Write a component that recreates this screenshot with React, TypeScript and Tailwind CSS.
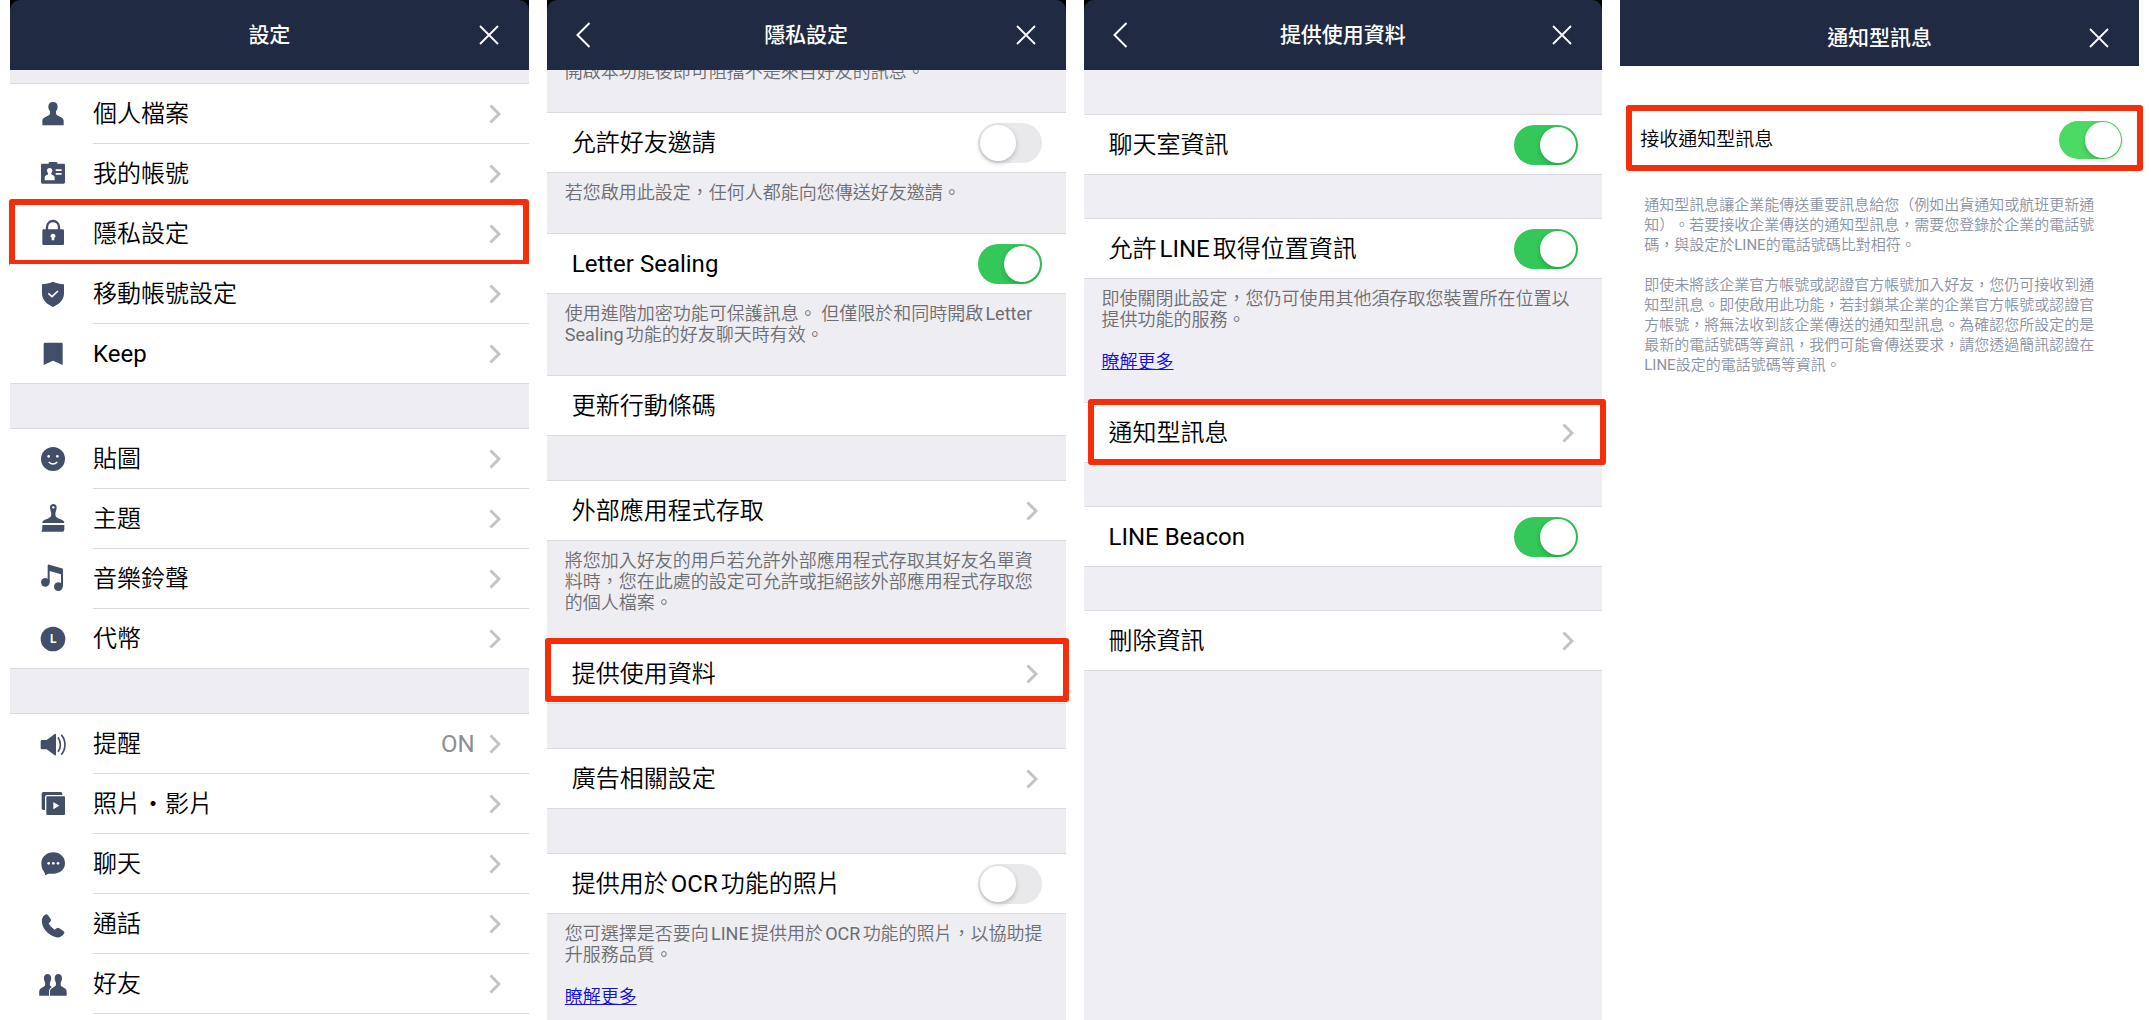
import type { ReactNode } from "react";

const PERSON =
  "M70 36c-9 0-14 6-14 14 0 5 2 10 5 14v6c0 4-3 6-8 8-8 4-15 7-15 15v13h64V93c0-8-7-11-15-15-5-2-8-4-8-8v-6c3-4 5-9 5-14 0-8-5-14-14-14z";

function Glyph({ cy, children }: { cy: number; children: ReactNode }) {
  return (
    <svg
      viewBox={`25 ${cy - 45} 90 90`}
      className="size-[30px] shrink-0 fill-[#434e68]"
      aria-hidden="true"
    >
      {children}
    </svg>
  );
}

const icons: Record<string, ReactNode> = {
  person: (
    <Glyph cy={72}>
      <path d={PERSON} />
    </Glyph>
  ),
  badge: (
    <Glyph cy={252}>
      <path d="M38 221h19v-2a3 3 0 0 1 3-3h20a3 3 0 0 1 3 3v2h19a4 4 0 0 1 4 4v52a4 4 0 0 1-4 4H38a4 4 0 0 1-4-4v-52a4 4 0 0 1 4-4z" />
      <path
        fill="#fff"
        d="M60 234c-5 0-8 3-8 8 0 3 1 5 3 7v4c-4 3-10 4-10 10v8h30v-8c0-6-6-7-10-10v-4c2-2 3-4 3-7 0-5-3-8-8-8zM78 238h18v5H78zM78 249h18v5H78z"
      />
    </Glyph>
  ),
  lock: (
    <Glyph cy={432}>
      <path fill="none" stroke="#434e68" strokeWidth="7" d="M52 421v-10a18 18 0 0 1 36 0v10" />
      <rect x="38" y="418" width="65" height="47" rx="4" />
      <path fill="#fff" d="M70 431a7 7 0 0 0-4 13v7h8v-7a7 7 0 0 0-4-13z" />
    </Glyph>
  ),
  shield: (
    <Glyph cy={612}>
      <path d="M70 575c10 5 22 7 33 8v27c0 20-14 33-33 41-19-8-33-21-33-41v-27c11-1 23-3 33-8z" />
      <path fill="none" stroke="#fff" strokeWidth="5" d="M56 610l11 10 18-17" />
    </Glyph>
  ),
  bookmark: (
    <Glyph cy={792}>
      <path d="M46 758h49a4 4 0 0 1 4 4v63l-29-13-28 13v-63a4 4 0 0 1 4-4z" />
    </Glyph>
  ),
  smile: (
    <Glyph cy={87}>
      <circle cx="70" cy="87" r="36" />
      <circle cx="57" cy="79" r="4" fill="#fff" />
      <circle cx="83" cy="79" r="4" fill="#fff" />
      <path fill="none" stroke="#fff" strokeWidth="4" d="M57 96q13 12 26 0" />
    </Glyph>
  ),
  brush: (
    <Glyph cy={267}>
      <path d="M71 222c-6 0-10 4-10 10 0 8 4 14 4 21s-4 10-11 13c-8 3-16 4-16 13h66c0-9-8-10-16-13-7-3-11-6-11-13s4-13 4-21c0-6-4-10-10-10z" />
      <path d="M38 285h66v11c0 5-2 9-5 9H35c3-5 3-12 3-20z" />
      <circle cx="71" cy="232" r="3.5" fill="#fff" />
    </Glyph>
  ),
  music: (
    <Glyph cy={447}>
      <circle cx="47" cy="457" r="13" />
      <circle cx="86" cy="470" r="13" />
      <path d="M54 407c0-3 2-4 5-3l37 11c3 1 4 2 4 5v50h-6v-37l-34-10v34h-6z" />
    </Glyph>
  ),
  coin: (
    <Glyph cy={627}>
      <circle cx="70" cy="627" r="37" />
      <text
        x="71"
        y="640"
        textAnchor="middle"
        className="fill-white font-[Roboto,sans-serif] text-[36px] font-bold"
      >
        L
      </text>
    </Glyph>
  ),
  speaker: (
    <Glyph cy={102}>
      <path d="M37 90h14l24-18c2-1 4 0 4 2v60c0 2-2 3-4 2l-24-18H37a4 4 0 0 1-4-4V94a4 4 0 0 1 4-4z" />
      <path
        fill="none"
        stroke="#434e68"
        strokeWidth="5"
        strokeLinecap="round"
        d="M86 84c8 11 8 29 0 40M96 76c13 15 13 41 0 56"
      />
    </Glyph>
  ),
  media: (
    <Glyph cy={282}>
      <rect x="36" y="246" width="62" height="54" rx="5" />
      <rect x="48" y="257" width="60" height="60" rx="5" stroke="#fff" strokeWidth="4" />
      <path fill="#fff" d="M71 276l18 11-18 11z" />
    </Glyph>
  ),
  chat: (
    <Glyph cy={462}>
      <path d="M71 427c20 0 35 14 35 33s-15 31-35 31H58c-4 0-6 2-11 5-1-4-2-8-5-12-5-6-7-14-7-24 0-19 16-33 36-33z" />
      <circle cx="57" cy="460" r="4" fill="#fff" />
      <circle cx="71" cy="460" r="4" fill="#fff" />
      <circle cx="85" cy="460" r="4" fill="#fff" />
    </Glyph>
  ),
  phone: (
    <Glyph cy={642}>
      <path d="M44 616c4-4 8-4 11 0l8 11c2 3 1 6-1 8l-5 5c4 8 10 14 18 19l6-4c3-2 5-2 8 0l12 8c4 3 4 6 1 9-6 9-15 12-25 9-22-7-36-22-40-42-2-9 1-17 7-23z" />
    </Glyph>
  ),
  friends: (
    <Glyph cy={822}>
      <path d={PERSON} transform="translate(-1 758.5) scale(.78 .93)" />
      <path
        d={PERSON}
        transform="translate(31.4 758.5) scale(.78 .93)"
        stroke="#fff"
        strokeWidth="8"
        paintOrder="stroke"
      />
    </Glyph>
  ),
};

/** Sets Latin words in the regular weight beside the lighter Chinese text. */
function Mixed({ text }: { text: string }) {
  return (
    <>
      {text.split(/([A-Za-z]+(?: [A-Za-z]+)*)/).map((part, i) =>
        i % 2 === 1 ? (
          <span key={i} className="font-normal">
            {part}
          </span>
        ) : (
          part
        ),
      )}
    </>
  );
}

function Chevron() {
  return (
    <svg
      viewBox="0 0 12 20"
      className="h-5 w-3 shrink-0 fill-none stroke-[#c3c3c8] stroke-[3]"
      aria-hidden="true"
    >
      <path d="M1.5 1.5 10 10l-8.5 8.5" />
    </svg>
  );
}

function Header({ title, back, flat }: { title: string; back?: boolean; flat?: boolean }) {
  return (
    <div className={flat ? "relative z-10" : "relative z-10 bg-black"}>
      <header
        className={
          flat
            ? "flex h-[66px] items-center bg-[#202a43] px-7 pt-[10px] text-white"
            : "flex h-[70px] items-center rounded-t-[10px] bg-[#202a43] px-7 text-white"
        }
      >
        <div className="flex w-8">
          {back && (
            <button type="button" aria-label="返回">
              <svg viewBox="0 0 16 26" className="h-[26px] w-4 fill-none stroke-white stroke-2">
                <path d="M14.5 1 2.5 13l12 12" />
              </svg>
            </button>
          )}
        </div>
        <h2 className="flex-1 text-center text-[21px] leading-8 font-medium">{title}</h2>
        <div className="flex w-8 justify-end pr-0.5">
          <button type="button" aria-label="關閉">
            <svg viewBox="0 0 20 20" className="size-5 fill-none stroke-white stroke-[1.8]">
              <path d="m1 1 18 18M19 1 1 19" />
            </svg>
          </button>
        </div>
      </header>
    </div>
  );
}

const LINE = "border-[#dadade]";

function MenuRow({
  icon,
  label,
  value,
  last,
  children,
}: {
  icon: string;
  label: string;
  value?: string;
  last?: boolean;
  children?: ReactNode;
}) {
  return (
    <li className="relative">
      <button
        type="button"
        className={`flex h-15 w-full items-center gap-[25px] bg-white pl-7 text-left text-2xl ${
          last ? `border-b ${LINE}` : ""
        }`}
      >
        {icons[icon]}
        <span
          className={`flex flex-1 items-center self-stretch pr-7 ${last ? "" : `border-b ${LINE}`}`}
        >
          <span className="flex-1">
            <Mixed text={label} />
          </span>
          {value && <span className="pr-3.5 font-normal text-[#8e8e93]">{value}</span>}
          <Chevron />
        </span>
      </button>
      {children}
    </li>
  );
}

function LinkRow({
  label,
  arrow = true,
  children,
}: {
  label: string;
  arrow?: boolean;
  children?: ReactNode;
}) {
  return (
    <div className="relative">
      <button
        type="button"
        className={`flex h-15 w-full items-center border-b bg-white pr-7 pl-[25px] text-left text-2xl ${LINE}`}
      >
        <span className="flex-1">{label}</span>
        {arrow && <Chevron />}
      </button>
      {children}
    </div>
  );
}

const SWITCH =
  "flex shrink-0 cursor-pointer appearance-none rounded-full bg-[#e9e9eb] before:size-9 before:rounded-full before:bg-white before:shadow-[0_2px_5px_rgba(0,0,0,0.22)] before:content-['']";

function SwitchRow({ label, on }: { label: string; on?: boolean }) {
  return (
    <label
      className={`flex h-15 items-center border-b bg-white pr-6 pl-[25px] text-2xl ${LINE}`}
    >
      <span className="flex-1">
        <Mixed text={label} />
      </span>
      <input
        type="checkbox"
        role="switch"
        defaultChecked={on}
        className={`h-10 w-16 p-0.5 checked:bg-[#34c759] checked:before:translate-x-6 ${SWITCH}`}
      />
    </label>
  );
}

function Note({ text, more, last }: { text: string; more?: boolean; last?: boolean }) {
  return (
    <div
      className={`flex flex-col items-start gap-[21px] pt-[9px] pr-5 pl-[18px] text-lg leading-[21px] text-[#6d6d72] ${
        last ? "" : `border-b pb-[30px] ${LINE}`
      }`}
    >
      <p>
        <Mixed text={text} />
      </p>
      {more && (
        <a href="#more" className="text-[#1410e0] underline">
          瞭解更多
        </a>
      )}
    </div>
  );
}

function Gap() {
  return <div className={`h-[45px] border-b ${LINE}`} />;
}

function ShortGap() {
  return <div className={`h-11 border-b ${LINE}`} />;
}

const MARK = "pointer-events-none absolute rounded-[3px] border-6 border-[#f52d0a]";

export default function App() {
  return (
    <main
      lang="zh-TW"
      className="grid min-h-screen grid-cols-4 gap-[18px] bg-white pr-3 pl-2.5 font-[Roboto,'Noto_Sans_CJK_TC',sans-serif] font-[350] text-black [text-autospace:normal] [text-spacing-trim:space-all]"
    >
      <section className="flex flex-col bg-white">
        <Header title="設定" />
        <div className={`h-3.5 border-b bg-[#eeedf2] ${LINE}`} />
        <ul>
          <MenuRow icon="person" label="個人檔案" />
          <MenuRow icon="badge" label="我的帳號" />
          <MenuRow icon="lock" label="隱私設定">
            <div className={`-top-[5px] right-0 -bottom-0.5 -left-px ${MARK}`} />
          </MenuRow>
          <MenuRow icon="shield" label="移動帳號設定" />
          <MenuRow icon="bookmark" label="Keep" last />
        </ul>
        <div className="bg-[#eeedf2]">
          <Gap />
        </div>
        <ul>
          <MenuRow icon="smile" label="貼圖" />
          <MenuRow icon="brush" label="主題" />
          <MenuRow icon="music" label="音樂鈴聲" />
          <MenuRow icon="coin" label="代幣" last />
        </ul>
        <div className="bg-[#eeedf2]">
          <Gap />
        </div>
        <ul>
          <MenuRow icon="speaker" label="提醒" value="ON" />
          <MenuRow icon="media" label="照片・影片" />
          <MenuRow icon="chat" label="聊天" />
          <MenuRow icon="phone" label="通話" />
          <MenuRow icon="friends" label="好友" />
        </ul>
      </section>

      <section className="flex flex-col bg-[#eeedf2]">
        <Header title="隱私設定" back />
        <div
          className={`flex h-[43px] flex-col justify-end overflow-hidden border-b pb-[30px] pl-[18px] text-lg leading-[21px] text-[#6d6d72] ${LINE}`}
        >
          <p className="shrink-0">開啟本功能後即可阻擋不是來自好友的訊息。</p>
        </div>
        <SwitchRow label="允許好友邀請" />
        <Note text="若您啟用此設定，任何人都能向您傳送好友邀請。" />
        <SwitchRow label="Letter Sealing" on />
        <Note text="使用進階加密功能可保護訊息。 但僅限於和同時開啟Letter Sealing功能的好友聊天時有效。" />
        <LinkRow label="更新行動條碼" arrow={false} />
        <Gap />
        <LinkRow label="外部應用程式存取" />
        <Note text="將您加入好友的用戶若允許外部應用程式存取其好友名單資料時，您在此處的設定可允許或拒絕該外部應用程式存取您的個人檔案。" />
        <LinkRow label="提供使用資料">
          <div className={`-top-1.5 -right-[3px] bottom-0.5 -left-0.5 ${MARK}`} />
        </LinkRow>
        <Gap />
        <LinkRow label="廣告相關設定" />
        <Gap />
        <SwitchRow label="提供用於OCR功能的照片" />
        <Note
          text="您可選擇是否要向LINE提供用於OCR功能的照片，以協助提升服務品質。"
          more
          last
        />
      </section>

      <section className="flex flex-col bg-[#efeef4]">
        <Header title="提供使用資料" back />
        <Gap />
        <SwitchRow label="聊天室資訊" on />
        <ShortGap />
        <SwitchRow label="允許LINE取得位置資訊" on />
        <Note text="即使關閉此設定，您仍可使用其他須存取您裝置所在位置以提供功能的服務。" more />
        <LinkRow label="通知型訊息">
          <div className={`-top-1 -right-1 -bottom-0.5 left-1 ${MARK}`} />
        </LinkRow>
        <ShortGap />
        <SwitchRow label="LINE Beacon" on />
        <ShortGap />
        <LinkRow label="刪除資訊" />
      </section>

      <section className="flex flex-col bg-white [text-autospace:no-autospace]">
        <Header title="通知型訊息" flat />
        <div className="relative mt-11">
          <label className="flex h-15 items-center pr-[17px] pl-5 text-[19px]">
            <span className="flex-1">接收通知型訊息</span>
            <input
              type="checkbox"
              role="switch"
              defaultChecked
              className={`h-[38px] w-[63px] p-px checked:bg-[#4cd964] checked:before:translate-x-[25px] ${SWITCH}`}
            />
          </label>
          <div className={`-top-[5px] -right-1 -bottom-px left-1.5 ${MARK}`} />
        </div>
        <div className="flex flex-col gap-5 pt-[25px] pr-[34px] pl-6 text-[15px] leading-5 text-[#8b92a3]">
          <p>
            <Mixed text="通知型訊息讓企業能傳送重要訊息給您（例如出貨通知或航班更新通知）。若要接收企業傳送的通知型訊息，需要您登錄於企業的電話號碼，與設定於LINE的電話號碼比對相符。" />
          </p>
          <p>
            <Mixed text="即使未將該企業官方帳號或認證官方帳號加入好友，您仍可接收到通知型訊息。即使啟用此功能，若封鎖某企業的企業官方帳號或認證官方帳號，將無法收到該企業傳送的通知型訊息。為確認您所設定的是最新的電話號碼等資訊，我們可能會傳送要求，請您透過簡訊認證在LINE設定的電話號碼等資訊。" />
          </p>
        </div>
      </section>
    </main>
  );
}
